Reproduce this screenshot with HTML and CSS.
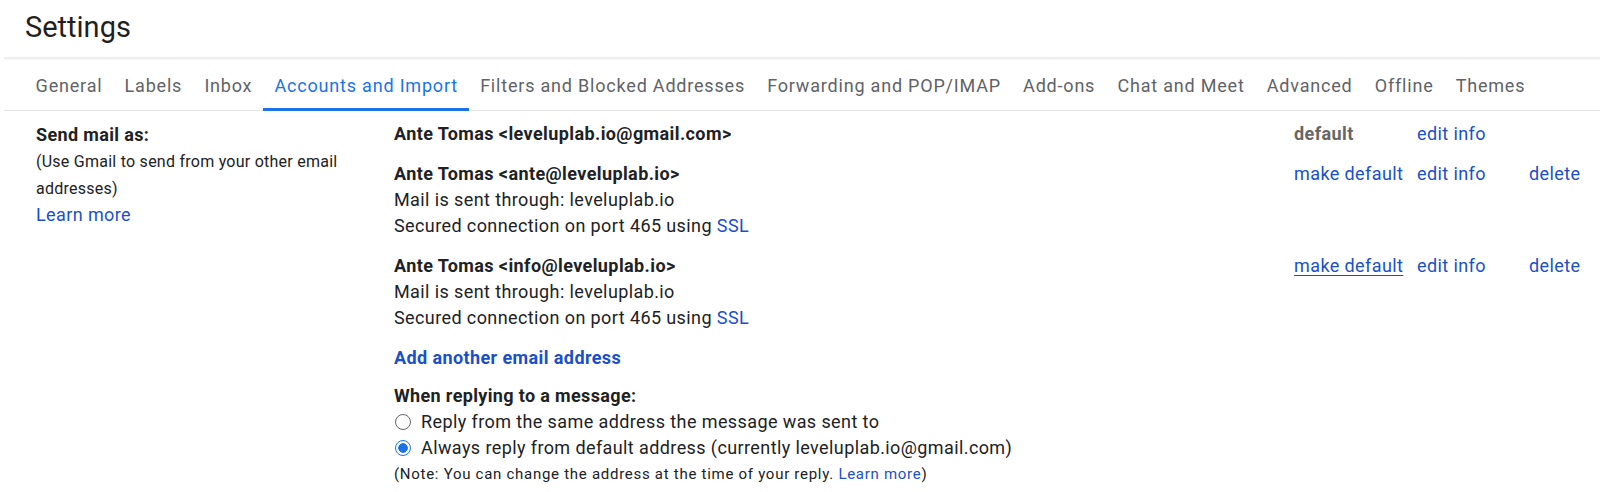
FILE: index.html
```html
<!DOCTYPE html>
<html>
<head>
<meta charset="utf-8">
<link rel="stylesheet" href="styles.css">
</head>
<body>
<header class="header">
  <h1 class="title">Settings</h1>
</header>
<nav class="tabs">
  <a class="tab">General</a>
  <a class="tab">Labels</a>
  <a class="tab">Inbox</a>
  <a class="tab active">Accounts and Import</a>
  <a class="tab">Filters and Blocked Addresses</a>
  <a class="tab">Forwarding and POP/IMAP</a>
  <a class="tab">Add-ons</a>
  <a class="tab">Chat and Meet</a>
  <a class="tab">Advanced</a>
  <a class="tab">Offline</a>
  <a class="tab">Themes</a>
</nav>
<main class="content">
  <section class="side">
    <div class="side-title">Send mail as:</div>
    <div class="side-desc">(Use Gmail to send from your other email addresses)</div>
    <a class="link side-link">Learn more</a>
  </section>
  <section class="main">
    <div class="account">
      <div class="acc-info"><div class="acc-name">Ante Tomas &lt;leveluplab.io@gmail.com&gt;</div></div>
      <div class="acc-act default-label">default</div>
      <div class="acc-act"><a class="link">edit info</a></div>
      <div class="acc-act"></div>
    </div>
    <div class="account">
      <div class="acc-info">
        <div class="acc-name">Ante Tomas &lt;ante@leveluplab.io&gt;</div>
        <div>Mail is sent through: leveluplab.io</div>
        <div>Secured connection on port 465 using <a class="link">SSL</a></div>
      </div>
      <div class="acc-act"><a class="link">make default</a></div>
      <div class="acc-act"><a class="link">edit info</a></div>
      <div class="acc-act"><a class="link">delete</a></div>
    </div>
    <div class="account">
      <div class="acc-info">
        <div class="acc-name">Ante Tomas &lt;info@leveluplab.io&gt;</div>
        <div>Mail is sent through: leveluplab.io</div>
        <div>Secured connection on port 465 using <a class="link">SSL</a></div>
      </div>
      <div class="acc-act"><a class="link underlined">make default</a></div>
      <div class="acc-act"><a class="link">edit info</a></div>
      <div class="acc-act"><a class="link">delete</a></div>
    </div>
    <div class="add-row"><a class="link bold">Add another email address</a></div>
    <div class="reply">
      <div class="reply-title">When replying to a message:</div>
      <label class="radio-row"><span class="radio"></span>Reply from the same address the message was sent to</label>
      <label class="radio-row"><span class="radio checked"></span>Always reply from default address (currently leveluplab.io@gmail.com)</label>
      <div class="note">(Note: You can change the address at the time of your reply. <a class="link">Learn more</a>)</div>
    </div>
  </section>
</main>
</body>
</html>
```
FILE: styles.css
```css
html, body {
  margin: 0;
  padding: 0;
  background: #fff;
}
body {
  width: 1600px;
  height: 492px;
  overflow: hidden;
  font-family: Roboto, "Liberation Sans", Arial, sans-serif;
  color: #202124;
}
.header {
  height: 57px;
  display: flex;
  align-items: center;
  padding-left: 25px;
}
.title {
  margin: 0;
  font-weight: 400;
  font-size: 29px;
  color: #1f1f1f;
  position: relative;
  top: -2px;
}
.tabs {
  margin-left: 4px;
  height: 51px;
  display: flex;
  align-items: stretch;
  padding-left: 20.5px;
  border-top: 2px solid #eeeeee;
  border-bottom: 1px solid #e3e3e3;
  box-shadow: inset 0 2px 2px -1px rgba(0,0,0,0.04);
}
.tab {
  display: flex;
  align-items: center;
  padding: 0 11.1px;
  font-size: 18px;
  color: #5f6368;
  letter-spacing: 0.8px;
  border-bottom: 3px solid transparent;
  margin-bottom: -1px;
  padding-top: 4px;
}
.tab.active {
  color: #1a73e8;
  border-bottom-color: #1a73e8;
}
.content {
  display: flex;
  padding: 10px 0 0 36px;
}
.side {
  width: 358px;
  flex: none;
  margin-top: 1px;
}
.side-title {
  font-weight: 700;
  font-size: 18px;
  line-height: 26px;
  letter-spacing: 0.35px;
}
.side-desc {
  font-size: 16px;
  line-height: 27px;
  letter-spacing: 0.25px;
  margin-top: 0;
  width: 320px;
}
.side-link {
  display: block;
  font-size: 18px;
  line-height: 26px;
  letter-spacing: 0.4px;
}
.link {
  color: #1a4fc9;
  text-decoration: none;
}
.link.underlined {
  text-decoration: underline;
  text-underline-offset: 3px;
}
.link.bold {
  font-weight: 700;
}
.main {
  flex: 1;
  font-size: 18px;
  line-height: 26px;
  letter-spacing: 0.4px;
}
.account {
  display: grid;
  grid-template-columns: 900px 123px 112px 71px;
  margin-bottom: 14px;
}
.acc-name {
  font-weight: 700;
}
.default-label {
  font-weight: 700;
  color: #666666;
}
.add-row {
  margin-bottom: 12px;
}
.reply-title {
  font-weight: 700;
  letter-spacing: 0.35px;
}
.radio-row {
  display: flex;
  align-items: center;
  letter-spacing: 0.4px;
}
.radio {
  width: 14px;
  height: 14px;
  border: 1.5px solid #5f6368;
  border-radius: 50%;
  margin: 0 10px 0 1px;
  box-sizing: content-box;
  flex: none;
  background: #fff;
}
.radio.checked {
  border-color: #1a73e8;
  background: radial-gradient(circle, #1a73e8 0 4.5px, #fff 5px);
}
.note {
  font-size: 15px;
  line-height: 26px;
  letter-spacing: 0.72px;
}
```
